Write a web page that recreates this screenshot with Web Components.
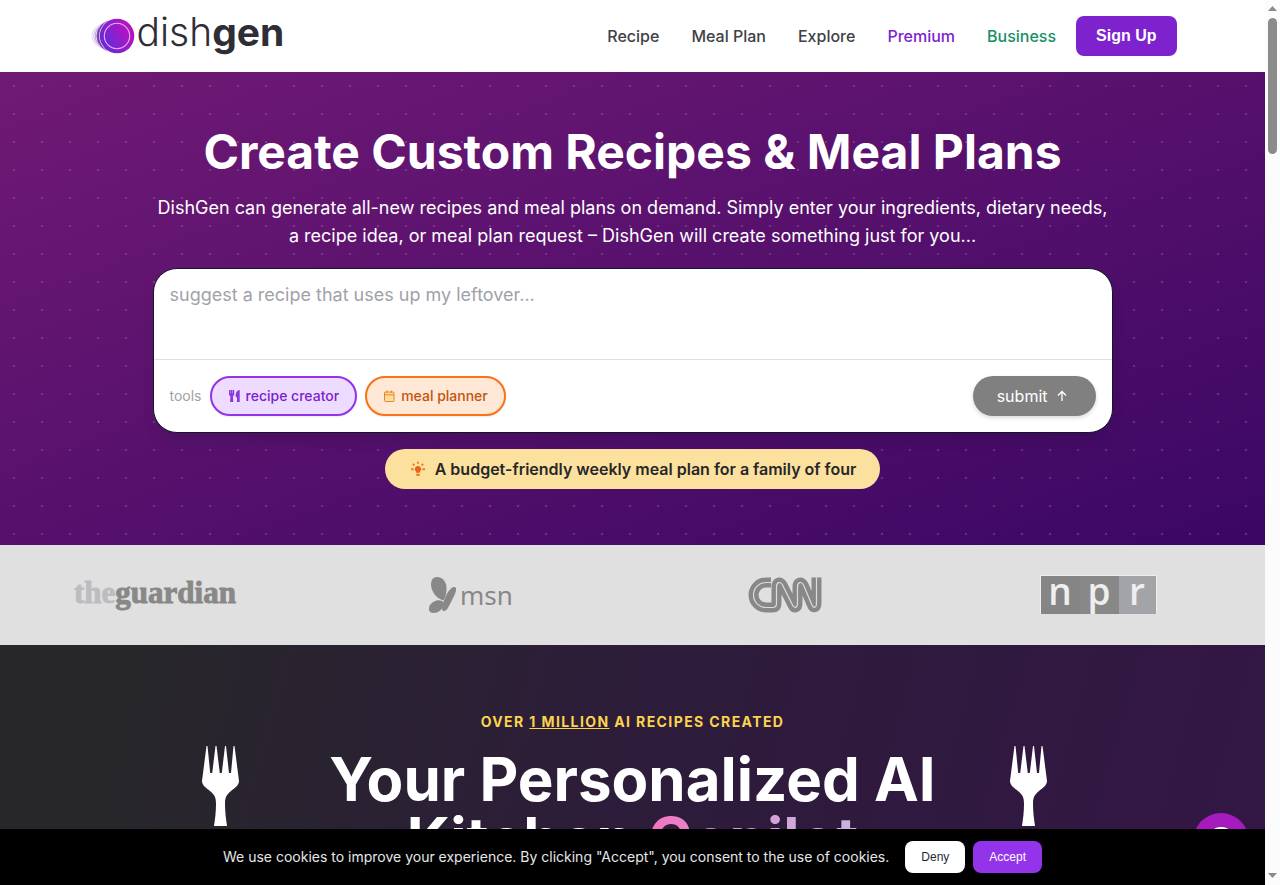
<!DOCTYPE html>
<html lang="en">
<head>
<meta charset="utf-8">
<meta name="viewport" content="width=device-width, initial-scale=1">
<title>DishGen</title>
<style>
  html, body { margin: 0; height: 100%; }
  body {
    font-family: Inter, "Liberation Sans", sans-serif;
    font-size: 16px;
    overflow: hidden;
  }
</style>
</head>
<body>
<dish-app></dish-app>

<script>
class DishLogo extends HTMLElement {
  constructor() {
    super();
    this.attachShadow({ mode: "open" });
    this.shadowRoot.innerHTML = `
      <style>
        :host { display: block; }
        a {
          display: flex;
          align-items: center;
          color: #2f2e36;
          text-decoration: none;
          font-size: 39px;
          line-height: 40px;
          font-weight: 300;
        }
        svg { display: block; margin-right: 2px; }
        span { padding-bottom: 8px; }
        b { font-weight: 700; }
      </style>
      <a href="#">
        <svg width="46" height="40" viewBox="0 0 46 40" aria-hidden="true">
          <defs>
            <linearGradient id="plate" x1="0" y1="0.8" x2="1" y2="0.2">
              <stop offset="0.1" stop-color="#6d28d9"/>
              <stop offset="0.9" stop-color="#b414c0"/>
            </linearGradient>
          </defs>
          <circle cx="14" cy="20" r="11.500" fill="#eadcf4"/>
          <circle cx="17" cy="20" r="13" fill="#cdb0e2" stroke="#fff" stroke-width=".8"/>
          <circle cx="20" cy="20" r="14.500" fill="#a77acb" stroke="#fff" stroke-width=".8"/>
          <circle cx="23" cy="20" r="16" fill="#7d43b5" stroke="#fff" stroke-width=".8"/>
          <circle cx="28" cy="20" r="17.800" fill="#fff"/>
          <circle cx="28" cy="20" r="17.300" fill="url(#plate)"/>
          <circle cx="28" cy="20" r="12.700" fill="url(#plate)" stroke="#e3b5ee" stroke-width="1.100"/>
        </svg>
        <span>dish<b>gen</b></span>
      </a>
    `;
  }
}
customElements.define("dish-logo", DishLogo);

class DishHeader extends HTMLElement {
  constructor() {
    super();
    this.attachShadow({ mode: "open" });
    this.shadowRoot.innerHTML = `
      <style>
        :host { display: block; background: #fff; }
        header {
          display: flex;
          align-items: center;
          justify-content: space-between;
          box-sizing: border-box;
          max-width: 1120px;
          height: 72px;
          margin: 0 auto;
          padding: 0 16px;
        }
        nav { display: flex; align-items: center; gap: 32px; font-weight: 500; line-height: 24px; }
        nav a { color: #3f3f46; text-decoration: none; }
        nav a.premium { color: #7e22ce; }
        nav a.business { color: #198f66; }
        .right { display: flex; align-items: center; gap: 20px; }
        button {
          height: 40px;
          padding: 0 20px;
          border: 0;
          border-radius: 8px;
          background: #7e22ce;
          color: #fff;
          font: bold 16px "Liberation Sans", Arial, sans-serif;
        }
      </style>
      <header>
        <dish-logo></dish-logo>
        <div class="right">
          <nav>
            <a href="#">Recipe</a>
            <a href="#">Meal Plan</a>
            <a href="#">Explore</a>
            <a href="#" class="premium">Premium</a>
            <a href="#" class="business">Business</a>
          </nav>
          <button type="button">Sign Up</button>
        </div>
      </header>
    `;
  }
}
customElements.define("dish-header", DishHeader);

// Rounded tool button, tone is "purple" or "orange"
class ToolChip extends HTMLElement {
  constructor() {
    super();
    this.attachShadow({ mode: "open" });
    this.shadowRoot.innerHTML = `
      <style>
        :host { display: block; --line: #9333ea; --fill: #eddcff; --ink: #7e22ce; }
        :host([tone="orange"]) { --line: #f97316; --fill: #ffe8d6; --ink: #c2540f; }
        button {
          display: flex;
          align-items: center;
          gap: 5px;
          height: 40px;
          padding: 0 16px;
          border: 2px solid var(--line);
          border-radius: 20px;
          background: var(--fill);
          color: var(--ink);
          font: 500 14px/20px Inter, sans-serif;
          box-shadow: 0 1px 2px rgba(0, 0, 0, 0.08);
        }
      </style>
      <button type="button"><slot name="icon"></slot><slot></slot></button>
    `;
  }
}
customElements.define("tool-chip", ToolChip);

class RecipePrompt extends HTMLElement {
  constructor() {
    super();
    this.attachShadow({ mode: "open" });
    this.shadowRoot.innerHTML = `
      <style>
        :host {
          display: block;
          overflow: hidden;
          border: 1px solid #111827;
          border-radius: 24px;
          background: #fff;
          box-shadow: 0 10px 15px -3px rgba(0, 0, 0, 0.12);
        }
        textarea {
          display: block;
          box-sizing: border-box;
          width: 100%;
          height: 90px;
          padding: 12px 16px;
          border: 0;
          outline: 0;
          resize: none;
          background: none;
          font: 18px/28px Inter, sans-serif;
        }
        textarea::placeholder { color: #a1a1aa; opacity: 1; }
        .tools {
          display: flex;
          align-items: center;
          gap: 8px;
          padding: 16px;
          border-top: 1px solid #e0e0e0;
          color: #a1a1a1;
          font-size: 14px;
          line-height: 20px;
        }
        svg { display: block; }
        .submit {
          display: flex;
          align-items: center;
          gap: 7px;
          height: 40px;
          margin-left: auto;
          padding: 0 25px 0 24px;
          border: 0;
          border-radius: 20px;
          background: #808080;
          color: #fff;
          font: 16px/24px Inter, sans-serif;
          box-shadow: 0 2px 4px rgba(0, 0, 0, 0.15);
        }
      </style>
      <textarea aria-label="Recipe request" placeholder="suggest a recipe that uses up my leftover..."></textarea>
      <div class="tools">
        <span>tools</span>
        <tool-chip tone="purple">
          <svg slot="icon" width="13" height="14" viewBox="0 0 13 14" fill="#8b35dc" aria-hidden="true">
            <path d="M1 1h1.400v3.500h.4V1h1.600v3.500h.4V1h1.400v4c0 1.100-.5 1.700-1.300 2l.3 5.500c0 .4-.2.500-.6.500H2.700c-.4 0-.6-.1-.6-.5L2.400 7C1.500 6.700 1 6.100 1 5z"/>
            <path d="M11.700 1v11.500c0 .4-.2.500-.6.500H9.500c-.4 0-.6-.1-.6-.5l.2-3.700L7.700 7.500C7.400 4.500 8.500 1.500 11.700 1z"/>
          </svg>recipe creator</tool-chip>
        <tool-chip tone="orange">
          <svg slot="icon" width="13" height="12" viewBox="0 0 13 12" fill="none" stroke="#ee8026" aria-hidden="true">
            <rect x="1.500" y="2" width="9.500" height="9.500" rx="1" fill="#fbdf9f"/>
            <path d="M1.500 4.800h9.500M4 .5V3M8.500.5V3"/>
          </svg>meal planner</tool-chip>
        <button type="button" class="submit">submit
          <svg width="16" height="16" viewBox="0 0 16 16" fill="none" stroke="#fff" stroke-width="1.300" aria-hidden="true">
            <path d="M7 13V3.500M3 7.500l4-4 4 4"/>
          </svg>
        </button>
      </div>
    `;
  }
}
customElements.define("recipe-prompt", RecipePrompt);

class DishHero extends HTMLElement {
  constructor() {
    super();
    this.attachShadow({ mode: "open" });
    this.shadowRoot.innerHTML = `
      <style>
        :host {
          display: block;
          padding: 56px 16px;
          background:
            radial-gradient(circle, rgba(255, 255, 255, 0.17) 1px, transparent 1px) 0 0 / 28px 28px,
            linear-gradient(to bottom right, #701a75, #3b0764);
          color: #fff;
          text-align: center;
        }
        .inner { max-width: 960px; margin: 0 auto; }
        h1 { margin: 0 0 18px; font-size: 48px; line-height: 48px; font-weight: 700; }
        p { margin: 0 0 18px; font-size: 18px; line-height: 28px; }
        recipe-prompt { margin-bottom: 16px; }
        .idea {
          display: inline-flex;
          align-items: center;
          gap: 8px;
          height: 40px;
          padding: 0 24px;
          border: 0;
          border-radius: 20px;
          background: #fbe19d;
          color: #27272a;
          font: 600 16px/24px Inter, sans-serif;
          vertical-align: top;
        }
        svg { display: block; }
      </style>
      <div class="inner">
        <h1>Create Custom Recipes &amp; Meal Plans</h1>
        <p>DishGen can generate all-new recipes and meal plans on demand. Simply enter your ingredients, dietary needs, a recipe idea, or meal plan request – DishGen will create something just for you...</p>
        <recipe-prompt></recipe-prompt>
        <button type="button" class="idea">
          <svg width="18" height="18" viewBox="0 0 18 18" aria-hidden="true">
            <path d="M9 1.800v2M3.800 3.800l1.600 1.600M14.200 3.800l-1.600 1.600M2 9.300h2.600M13.400 9.300h2.600" stroke="#f07a1e" stroke-width="1.900"/>
            <path d="M9 6a3.200 3.200 0 0 0-1.900 5.800v1h3.800v-1A3.200 3.200 0 0 0 9 6z" fill="#e8641b"/>
            <path d="M7.200 13.800h3.600v1.400l-.8.800H8l-.8-.8z" fill="#f07a1e"/>
          </svg>
          A budget-friendly weekly meal plan for a family of four
        </button>
      </div>
    `;
  }
}
customElements.define("dish-hero", DishHero);

class PressLogos extends HTMLElement {
  constructor() {
    super();
    this.attachShadow({ mode: "open" });
    // the CNN mark is one continuous track with a light line down its middle
    const track = "M69 11.500H64a12.500 12.500 0 0 0 0 25h6.500c3 0 4-1 4-4V16c0-5 4-6 6-2l10 20c2 4 5 3 5-2V16c0-5 4-6 6-2l8 19c2 5 5 4 5-1V6.500";
    this.shadowRoot.innerHTML = `
      <style>
        :host {
          display: flex;
          align-items: center;
          justify-content: space-between;
          box-sizing: border-box;
          height: 100px;
          padding: 0 84px 0 72px;
          background: #e0e0e0;
        }
        svg { display: block; width: 164px; height: 48px; overflow: visible; }
      </style>
      <svg viewBox="0 0 164 48" role="img" aria-label="The Guardian">
        <g font-family="'Liberation Serif', serif" font-weight="700" font-size="31" stroke-width=".9">
          <text x="2" y="32" fill="#bcbdc1" stroke="#bcbdc1">the<tspan fill="#888" stroke="#888">guardian</tspan></text>
        </g>
      </svg>
      <svg viewBox="0 0 164 48" role="img" aria-label="MSN">
        <g fill="#888">
          <path d="M50 6c5 0 9 4 9.500 10 .3 5-.5 9-3 13.500-7-2-12.500-9-12.500-16C44 9 46 6 50 6z"/>
          <path d="M55 30c2 1 2 3 1 5-1 4-5 7-9.500 7-4 0-5.500-3-4-7 2-4 8-7 12.500-5z"/>
          <path d="M67.500 16c2 0 2 3 .5 7l-6 12c-1.500 3-3 5-5.500 5-2 0-1.500-5 0-9 1.500-5 4-10 7-13 1.500-1.500 2.500-2 4-2z"/>
        </g>
        <text x="73" y="34" font-family="'Noto Sans', sans-serif" font-size="26" fill="#888">msn</text>
      </svg>
      <svg viewBox="0 0 164 48" role="img" aria-label="CNN">
        <g fill="none" stroke-linejoin="round">
          <path d="${track}" stroke="#888" stroke-width="10"/>
          <path d="${track}" stroke="#dcdcdf" stroke-width="1.200"/>
        </g>
      </svg>
      <svg viewBox="0 0 164 48" role="img" aria-label="NPR">
        <path d="M23 4h117v39H23z" fill="#eee"/>
        <path d="M24 5h39v38H24z" fill="#858585"/>
        <path d="M63 5h39v38H63z" fill="#888"/>
        <path d="M102 5h37v38h-37z" fill="#a3a4a8"/>
        <g font-family="'Open Sans', sans-serif" font-weight="600" font-size="37" fill="#eee" text-anchor="middle">
          <text x="43" y="34">n</text><text x="82" y="34">p</text><text x="120" y="34">r</text>
        </g>
      </svg>
    `;
  }
}
customElements.define("press-logos", PressLogos);

class CopilotIntro extends HTMLElement {
  constructor() {
    super();
    this.attachShadow({ mode: "open" });
    const fork = `
      <svg width="40" height="82" viewBox="0 0 40 82" fill="#fff" aria-hidden="true">
        <path d="M6.500 0h-1L1 35c0 4 4 7 8 10 5 4 6 7 6 13 0 8-1 15-2 22h13c-1-7-2-14-2-22 0-6 1-9 6-13 4-3 8-6 8-10L33.500 0h-1L30 27h-2L25 0h-1L20.800 27h-2L15.500 0h-1L11.200 27h-2z"/>
      </svg>`;
    this.shadowRoot.innerHTML = `
      <style>
        :host {
          display: block;
          padding: 64px 0;
          background: linear-gradient(105deg, #27272a 10%, #2d1c3a 50%, #331645);
          color: #fff;
          text-align: center;
        }
        .row {
          display: grid;
          grid-template-columns: 56px minmax(0, 1fr) 56px;
          max-width: 864px;
          margin: 0 auto;
        }
        svg { display: block; margin-top: 37px; }
        .eyebrow {
          margin: 0 0 15px;
          color: #fcd34d;
          font-size: 14px;
          line-height: 25px;
          font-weight: 700;
          letter-spacing: 0.1em;
          text-transform: uppercase;
        }
        u { text-decoration-thickness: 1px; text-underline-offset: 1px; }
        h2 { margin: 0 auto; max-width: 640px; font-size: 60px; line-height: 60px; font-weight: 700; }
        .accent {
          background: linear-gradient(90deg, #f472c0, #c9b2de 80%);
          -webkit-background-clip: text;
          background-clip: text;
          color: transparent;
        }
      </style>
      <div class="row">
        ${fork}
        <div>
          <p class="eyebrow">Over <u>1 million</u> AI recipes created</p>
          <h2>Your Personalized AI Kitchen <span class="accent">Copilot</span></h2>
        </div>
        ${fork}
      </div>
    `;
  }
}
customElements.define("copilot-intro", CopilotIntro);

class CookieBar extends HTMLElement {
  constructor() {
    super();
    this.attachShadow({ mode: "open" });
    this.shadowRoot.innerHTML = `
      <style>
        :host {
          display: flex;
          align-items: center;
          justify-content: center;
          gap: 8px;
          padding: 12px;
          background: #000;
          color: #e5e7eb;
          font-size: 14px;
          line-height: 20px;
        }
        p { margin: 0 8px 0 0; }
        button {
          height: 32px;
          padding: 0 16px;
          border: 0;
          border-radius: 8px;
          background: #fff;
          color: #1f2937;
          font: 12px "Liberation Sans", Arial, sans-serif;
        }
        .accept { background: #9333ea; color: #fff; }
      </style>
      <p>We use cookies to improve your experience. By clicking "Accept", you consent to the use of cookies.</p>
      <button type="button">Deny</button>
      <button type="button" class="accept">Accept</button>
    `;
  }
}
customElements.define("cookie-bar", CookieBar);

class ScrollTrack extends HTMLElement {
  constructor() {
    super();
    this.attachShadow({ mode: "open" });
    this.shadowRoot.innerHTML = `
      <style>
        :host {
          display: flex;
          flex-direction: column;
          align-items: center;
          background: #fcfcfc;
        }
        svg { display: block; }
        .thumb { width: 9px; height: 136px; border-radius: 5px; background: #8b8b8b; }
        .down { margin-top: auto; }
      </style>
      <svg width="15" height="18" viewBox="0 0 15 18" fill="#8b8b8b"><path d="M7.500 6 12 11H3z"/></svg>
      <div class="thumb"></div>
      <svg class="down" width="15" height="18" viewBox="0 0 15 18" fill="#8b8b8b"><path d="M7.500 11 3 6h9z"/></svg>
    `;
  }
}
customElements.define("scroll-track", ScrollTrack);

class DishApp extends HTMLElement {
  constructor() {
    super();
    this.attachShadow({ mode: "open" });
    this.shadowRoot.innerHTML = `
      <style>
        :host { display: grid; grid-template-columns: minmax(0, 1fr) 15px; height: 100vh; }
        .page { position: relative; overflow: hidden; }
        .chat {
          position: absolute;
          right: 16px;
          bottom: 16px;
          width: 56px;
          height: 56px;
          padding: 14px;
          border: 0;
          border-radius: 50%;
          background: #a61bbd;
        }
        .chat svg { display: block; }
        cookie-bar { position: absolute; left: 0; right: 0; bottom: 0; }
      </style>
      <div class="page">
        <dish-header></dish-header>
        <main>
          <dish-hero></dish-hero>
          <press-logos></press-logos>
          <copilot-intro></copilot-intro>
        </main>
        <button type="button" class="chat" aria-label="Open chat">
          <svg width="28" height="28" viewBox="0 0 28 28" fill="#fff" aria-hidden="true">
            <path d="M14 0a13 12 0 1 1-5 23l-6 3 1-7A12 12 0 0 1 14 0z"/>
          </svg>
        </button>
        <cookie-bar></cookie-bar>
      </div>
      <scroll-track aria-hidden="true"></scroll-track>
    `;
  }
}
customElements.define("dish-app", DishApp);
</script>
</body>
</html>
